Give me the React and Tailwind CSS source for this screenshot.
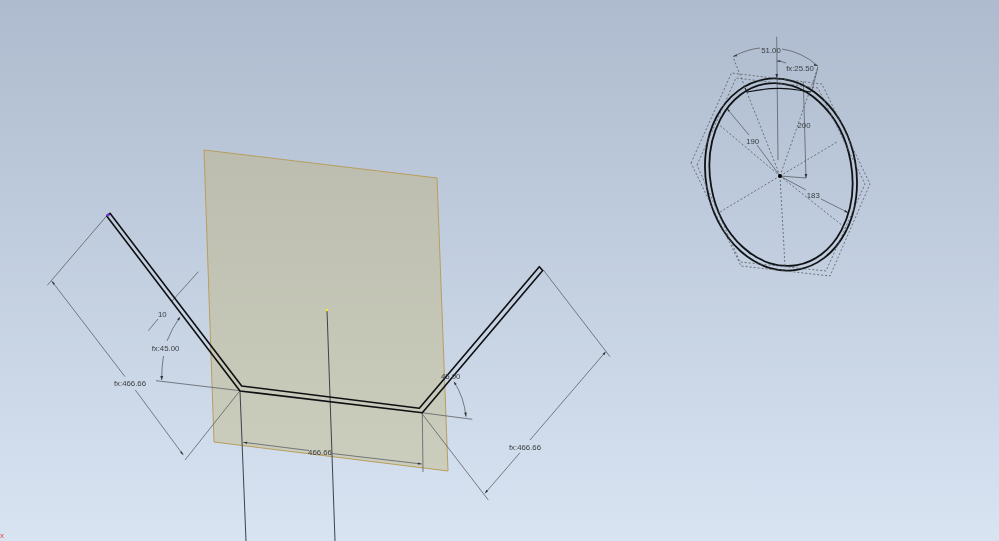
const DIM = "#5c6066";
const LINE = "#0e1012";

// thin dimension and extension lines, as x1 y1 x2 y2
const dimLines = [
	[156, 380.7, 240, 390.7],
	[198.3, 271.7, 172, 301],
	[158, 319, 148.3, 330.7],
	[106, 216.7, 47.3, 285.3],
	[51.7, 281, 125, 376.7],
	[135.3, 390, 183.3, 455],
	[185, 460, 240, 390.7],
	[543.3, 270, 610, 356.7],
	[605.7, 351.7, 530, 440],
	[520, 452.7, 485, 493.3],
	[421.7, 413.3, 488.3, 500],
	[421.7, 412.7, 472.3, 419.3],
	[243.3, 442.3, 309, 450.5],
	[332, 453.5, 421.7, 464],
	[422.3, 413, 423, 472],
	[776.7, 36.7, 778, 160],
	[803.3, 81.7, 806, 178],
	[806, 178, 780, 176],
	[726.7, 108.3, 749, 135],
	[757, 145, 780, 176],
	[780, 176, 806, 190],
	[821, 199, 848.3, 212.7],
	[818, 66.7, 811.7, 91.7],
];

// darker lines running down out of the picture
const axisLines = [
	[240, 391, 246, 541],
	[327, 310, 335, 541],
];

const dashedLines = [
	[780, 176, 733, 57],
	[780, 176, 818, 67],
	[780, 176, 717, 123],
	[780, 176, 720, 212],
	[780, 176, 837, 142],
	[780, 176, 848, 230],
	[780, 176, 785, 266],
];

const labels = [
	["fx:45.00", 165.5, 350.5],
	["10", 162.3, 317],
	["fx:466.66", 130, 386],
	["fx:466.66", 525, 449.5],
	["45.00", 450.7, 379],
	["466.66", 320, 454.5],
	["51.00", 771, 53],
	["fx:25.50", 800, 71],
	["200", 804, 128],
	["190", 752.7, 143.5],
	["183", 813.3, 198],
];

const App = () => {
	return (
		<div className="relative h-screen w-full overflow-hidden bg-gradient-to-b from-[#aebbce] to-[#d8e4f2] font-['Liberation_Sans',sans-serif]">
			<svg className="block h-full w-full blur-[0.4px]" viewBox="0 0 999 541" fill="none">
				<defs>
					<linearGradient id="panel" x1="0" y1="0" x2="0" y2="1">
						<stop offset="0" stopColor="#bcbdae" />
						<stop offset="1" stopColor="#cbcdbd" />
					</linearGradient>
				</defs>

				<path
					d="M204 150 L437 178 L448 471 L214 442 Z"
					fill="url(#panel)"
					stroke="#b89e5e"
					strokeWidth="1"
				/>

				{axisLines.map((l, i) => (
					<line key={i} x1={l[0]} y1={l[1]} x2={l[2]} y2={l[3]} stroke="#3e4247" strokeWidth="1" />
				))}

				{dimLines.map((l, i) => (
					<line key={i} x1={l[0]} y1={l[1]} x2={l[2]} y2={l[3]} stroke={DIM} strokeWidth="0.8" />
				))}

				{/* angle and radius arcs */}
				<g stroke={DIM} strokeWidth="0.8">
					<path d="M180 317 Q172 328 167 341" />
					<path d="M163.5 356 Q161.5 368 161.7 380" />
					<path d="M454 381.7 Q464 397 466 416.7" />
					<path d="M733 56.5 Q748 49 760 48" />
					<path d="M782 49 Q802 52 818 66" />
					<path d="M776.7 61 Q781 61 786 63" />
				</g>

				{/* arrow heads */}
				<g fill="#2c2f33">
					<path d="M161.7 380 l-1.4 -4 l2.8 0 Z" />
					<path d="M180 317 l-0.8 3.6 l-2.1 -1.4 Z" />
					<path d="M466 416.7 l-1.8 -4 l2.6 -0.3 Z" />
					<path d="M454 381.7 l2.7 2.4 l-1.9 1.1 Z" />
					<path d="M51.7 281 l3.2 2.4 l-1.6 1.3 Z" />
					<path d="M183.3 455 l-3.2 -2.4 l1.6 -1.3 Z" />
					<path d="M605.7 351.7 l-1.3 3.5 l-1.8 -1.4 Z" />
					<path d="M485 493.3 l1.3 -3.5 l1.8 1.4 Z" />
					<path d="M243.3 442.3 l4 -0.5 l-0.3 2.1 Z" />
					<path d="M421.7 464 l-4 0.5 l0.3 -2.1 Z" />
					<path d="M733 56.5 l3.6 -2.1 l0.5 1.9 Z" />
					<path d="M818 66 l-3.6 -2.2 l-0.5 1.9 Z" />
					<path d="M776.7 78 l-1.3 -4 l2.7 0 Z" />
					<path d="M776.7 61 l3.6 -0.8 l0 1.9 Z" />
					<path d="M806 178 l-1.4 -4 l2.7 0 Z" />
					<path d="M726.7 108.3 l3.2 2.2 l-1.4 1.3 Z" />
					<path d="M848.3 212.7 l-4 -0.8 l1 -1.8 Z" />
				</g>

				{/* bent sheet profile */}
				<g stroke={LINE} strokeWidth="1.6" strokeLinejoin="round">
					<path d="M110 213.3 L241.7 386 L419.3 408.3 L539.3 266.7 L542.7 270.5 L422.3 412.7 L240 391 L106.7 216 Z" />
				</g>

				{/* ring */}
				<g stroke="#101316" strokeWidth="1.8">
					<ellipse cx="781" cy="174.5" rx="75.3" ry="96.6" transform="rotate(-10 781 174.5)" />
					<ellipse cx="781" cy="174.5" rx="70.8" ry="92" transform="rotate(-10 781 174.5)" />
				</g>
				<path d="M745 88 L747 92 Q776 86 798 90 L811 92" stroke="#101316" strokeWidth="1.2" />

				{/* hexagons and radial construction lines */}
				<g stroke="#555a60" strokeWidth="0.8" strokeDasharray="2 2">
					<path d="M691 163 L731.5 73 L822 84 L870 184 L830 276 L741 266 Z" />
					<path d="M697 165 L736 78 L818 88 L865 184 L826 271 L740 262 Z" />
					{dashedLines.map((l, i) => (
						<line key={i} x1={l[0]} y1={l[1]} x2={l[2]} y2={l[3]} />
					))}
				</g>

				<circle cx="780" cy="176" r="2" fill="#000" />
				<circle cx="327" cy="310" r="1.2" fill="#f4ee3a" />
				<circle cx="108" cy="215" r="1.6" fill="#7a2fe0" />

				{labels.map((t, i) => (
					<text key={i} x={t[1]} y={t[2]} textAnchor="middle" fontSize="7.8" fill="#3a3d41">
						{t[0]}
					</text>
				))}

				<text x="0" y="538" fontSize="8" fill="#e8434f">
					x
				</text>
			</svg>
		</div>
	);
};

export default App;
